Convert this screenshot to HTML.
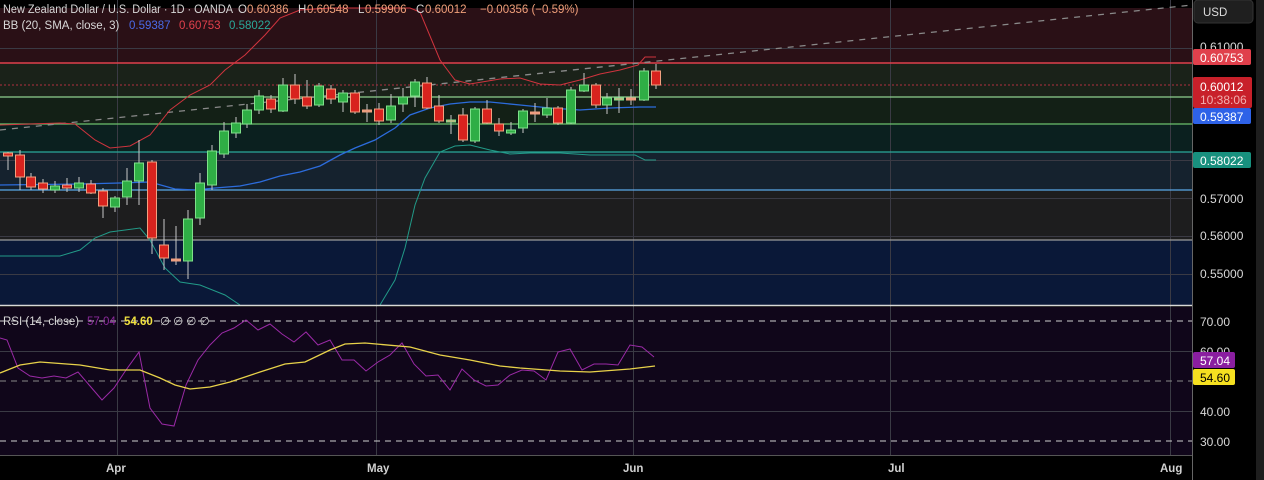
<!DOCTYPE html>
<html><head><meta charset="utf-8"><style>
html,body{margin:0;padding:0;background:#000;width:1264px;height:480px;overflow:hidden}
svg{display:block;font-family:"Liberation Sans",sans-serif}
</style></head><body>
<svg id="s" width="1264" height="480" viewBox="0 0 1264 480" xmlns="http://www.w3.org/2000/svg">
<rect width="1264" height="480" fill="#000"/>
<!-- main pane bands -->
<rect x="0" y="0" width="1192" height="63" fill="#2a1016"/>
<rect x="0" y="63" width="1192" height="34" fill="#1a2219"/>
<rect x="0" y="97" width="1192" height="27" fill="#132016"/>
<rect x="0" y="124" width="1192" height="28" fill="#0b201f"/>
<rect x="0" y="152" width="1192" height="38" fill="#15222e"/>
<rect x="0" y="190" width="1192" height="50" fill="#1d1d1e"/>
<rect x="0" y="240" width="1192" height="65" fill="#0a1838"/>
<!-- BB fill -->
<rect x="0" y="0" width="1192" height="8" fill="#000"/>
<!-- RSI pane -->
<rect x="0" y="307" width="1192" height="148" fill="#10061a"/>
<g id="grid" stroke="#3a3a44" stroke-width="1"></g>
<line x1="0" y1="63" x2="1192" y2="63" stroke="#e0404c" stroke-width="1.5"/>
<line x1="0" y1="85" x2="1192" y2="85" stroke="#b03040" stroke-width="1" stroke-dasharray="2,2"/>
<line x1="0" y1="97" x2="1192" y2="97" stroke="#8fd08f" stroke-width="1.2"/>
<line x1="0" y1="124" x2="1192" y2="124" stroke="#6cc06c" stroke-width="1.2"/>
<line x1="0" y1="152" x2="1192" y2="152" stroke="#2aa89a" stroke-width="1.2"/>
<line x1="0" y1="190" x2="1192" y2="190" stroke="#5aa8e8" stroke-width="1.2"/>
<line x1="0" y1="240" x2="1192" y2="240" stroke="#9a9a9a" stroke-width="1.2"/>
<line x1="0" y1="130" x2="1192" y2="5" stroke="#8a8a8a" stroke-width="1.3" stroke-dasharray="6,6"/>
<polyline fill="none" stroke="#d0343e" stroke-width="1" points="0,125 60,123 75,124 95,140 110,148 130,146 150,135 170,110 190,95 210,85 225,70 245,55 265,35 280,18 300,10 330,8 410,8 420,12 440,60 455,80 470,84 500,79 520,78 540,84 560,85 580,80 600,74 620,70 638,65 645,57 656,57"/>
<polyline fill="none" stroke="#2c6cdc" stroke-width="1.3" points="0,185 80,184 120,183 150,182 175,189 195,190 215,188 240,186 260,182 280,176 300,172 320,166 340,155 355,148 375,140 395,128 410,115 430,108 450,104 470,102 490,102 520,105 550,108 580,110 610,108 640,107 656,107"/>
<polyline fill="none" stroke="#229a88" stroke-width="1" points="0,256 60,256 80,250 95,238 110,232 140,228 150,240 165,268 180,282 200,285 225,295 240,305"/>
<polyline fill="none" stroke="#229a88" stroke-width="1" points="380,305 395,280 405,248 415,205 425,178 440,152 455,146 470,145 490,150 510,154 530,153 560,153 590,155 610,155 635,155 645,160 656,160"/>
<g id="candles"></g>
<!-- pane separator -->
<line x1="0" y1="305.5" x2="1256" y2="305.5" stroke="#d8d8d8" stroke-width="1.5"/>
<line x1="0" y1="455.5" x2="1192" y2="455.5" stroke="#555" stroke-width="1"/>
<!-- RSI lines -->
<line x1="0" y1="321" x2="1192" y2="321" stroke="#d0d0d0" stroke-width="1" stroke-dasharray="6,5"/>
<line x1="0" y1="381" x2="1192" y2="381" stroke="#888" stroke-width="1" stroke-dasharray="6,5"/>
<line x1="0" y1="441" x2="1192" y2="441" stroke="#d0d0d0" stroke-width="1" stroke-dasharray="6,5"/>
<polyline fill="none" stroke="#9a2aa6" stroke-width="1" points="0,338 7,340 18,368 30,376 42,378 54,376 66,378 78,372 90,386 102,400 114,388 126,370 139,352 150,408 162,424 174,426 186,385 198,360 210,345 222,333 234,328 246,320 258,330 270,324 282,334 294,342 306,332 318,345 330,340 342,360 354,360 366,371 378,362 390,355 402,343 414,364 426,376 438,375 450,390 462,369 474,380 486,386 498,385 510,375 522,370 534,371 546,380 558,352 570,349 582,370 594,364 606,364 618,365 630,345 642,347 654,357"/>
<polyline fill="none" stroke="#e8d24a" stroke-width="1.3" points="0,373 20,365 40,362 80,365 110,370 140,370 160,378 175,385 190,389 210,387 230,382 260,372 285,364 305,362 330,350 345,344 365,343 410,347 440,355 470,360 500,366 520,368 560,371 590,372 630,369 655,366"/>
<!-- right axis -->
<rect x="1192" y="0" width="64" height="480" fill="#000"/>
<line x1="1192.5" y1="0" x2="1192.5" y2="480" stroke="#666" stroke-width="1"/>
<rect x="1256" y="0" width="8" height="480" fill="#1e1e1e"/>
<rect x="1194" y="0" width="59" height="23" rx="4" fill="#1f1f1f" stroke="#333"/>
<text x="1203" y="16" font-size="11.5" fill="#ddd">USD</text>
<g font-size="12" fill="#d8d8d8">
<text x="1200" y="51">0.61000</text>
<text x="1200" y="124">0.59000</text>
<text x="1200" y="203">0.57000</text>
<text x="1200" y="240">0.56000</text>
<text x="1200" y="278">0.55000</text>
<text x="1200" y="326">70.00</text>
<text x="1200" y="356">60.00</text>
<text x="1200" y="416">40.00</text>
<text x="1200" y="446">30.00</text>
</g>
<rect x="1193" y="49" width="58" height="16" rx="2" fill="#e0404c"/>
<text x="1200" y="62" font-size="12" fill="#fff">0.60753</text>
<rect x="1193" y="77" width="59" height="31" rx="2" fill="#c8202a"/>
<text x="1200" y="91" font-size="12" fill="#fff">0.60012</text>
<text x="1200" y="104" font-size="12" fill="#f0b0b0">10:38:06</text>
<rect x="1193" y="108" width="58" height="16" rx="2" fill="#2e62e8"/>
<text x="1200" y="121" font-size="12" fill="#fff">0.59387</text>
<rect x="1193" y="152" width="58" height="16" rx="2" fill="#18907e"/>
<text x="1200" y="165" font-size="12" fill="#fff">0.58022</text>
<rect x="1193" y="352" width="42" height="16" rx="2" fill="#8a1ea0"/>
<text x="1200" y="365" font-size="12" fill="#fff">57.04</text>
<rect x="1193" y="369" width="42" height="16" rx="2" fill="#f5e020"/>
<text x="1200" y="382" font-size="12" fill="#000">54.60</text>
<!-- time axis -->
<g font-size="11.5" fill="#d0d0d0" font-weight="bold">
<text x="106" y="472">Apr</text>
<text x="367" y="472">May</text>
<text x="623" y="472">Jun</text>
<text x="888" y="472">Jul</text>
<text x="1160" y="472">Aug</text>
</g>
<!-- legend -->
<g font-size="11.5">
<text x="3" y="13" fill="#d8d8d8" textLength="230" lengthAdjust="spacingAndGlyphs">New Zealand Dollar / U.S. Dollar · 1D · OANDA</text>
<text x="238" y="13" fill="#d8d8d8">O</text><text x="247" y="13" fill="#f0a07a">0.60386</text>
<text x="298" y="13" fill="#d8d8d8">H</text><text x="307" y="13" fill="#f0a07a">0.60548</text>
<text x="358" y="13" fill="#d8d8d8">L</text><text x="365" y="13" fill="#f0a07a">0.59906</text>
<text x="416" y="13" fill="#d8d8d8">C</text><text x="425" y="13" fill="#f0a07a">0.60012</text>
<text x="480" y="13" fill="#f0a07a">−0.00356 (−0.59%)</text>
<text x="3" y="29" fill="#d8d8d8">BB (20, SMA, close, 3)</text>
<text x="129" y="29" fill="#4a6ae8">0.59387</text>
<text x="179" y="29" fill="#e0404c">0.60753</text>
<text x="229" y="29" fill="#2aa89a">0.58022</text>
<text x="3" y="325" fill="#d8d8d8">RSI (14, close)</text>
<text x="87" y="325" fill="#8a2a9a">57.04</text>
<text x="124" y="325" fill="#f0e040" font-weight="bold">54.60</text>
<text x="160" y="325" fill="#d8d8d8">∅ ∅ ∅ ∅</text>
</g>
</svg>
<script>
var NS="http://www.w3.org/2000/svg";
function el(p,t,a){var e=document.createElementNS(NS,t);for(var k in a)e.setAttribute(k,a[k]);p.appendChild(e);return e;}
var g=document.getElementById('grid');
[117,376,633,890,1170].forEach(function(x){el(g,'line',{x1:x+.5,y1:0,x2:x+.5,y2:455});});
[48,160,198,236,274].forEach(function(y){el(g,'line',{x1:0,y1:y+.5,x2:1192,y2:y+.5});});
[351,411].forEach(function(y){el(g,'line',{x1:0,y1:y+.5,x2:1192,y2:y+.5});});
// x, open, close, high, low (y coords)
var C=[[8,153,156,152,170],[20,155,177,150,190],[31,177,187,173,190],[43,183,189,179,193],[55,190,186,181,193],[67,185,188,178,192],[79,188,183,177,192],[91,184,193,180,194],[103,191,206,188,218],[115,207,198,196,212],[127,197,181,168,205],[139,181,163,140,205],[152,162,238,160,254],[164,245,258,219,270],[176,259,261,226,265],[188,261,219,210,279],[200,218,183,173,225],[212,185,151,145,190],[224,154,131,122,158],[236,133,123,117,138],[247,124,110,104,128],[259,110,96,90,114],[271,99,109,95,113],[283,111,85,78,112],[295,85,99,74,104],[307,97,106,80,109],[319,105,86,83,107],[331,89,99,85,104],[343,102,93,90,112],[355,93,112,90,114],[367,110,111,104,122],[379,109,121,103,125],[391,120,106,94,123],[403,104,97,88,112],[415,96,82,79,107],[427,83,108,77,109],[439,106,121,95,123],[451,122,120,115,134],[463,115,140,108,142],[475,141,109,107,143],[487,109,123,100,124],[499,124,131,118,136],[511,133,130,122,135],[523,128,111,109,133],[535,112,113,103,122],[547,115,108,98,118],[558,108,123,106,125],[571,123,90,87,124],[584,91,85,73,92],[596,85,105,83,108],[607,105,98,93,114],[619,99,98,88,113],[631,98,99,89,105],[644,100,71,68,101],[656,71,85,64,89]];
var cg=document.getElementById('candles');
C.forEach(function(c){
 var x=c[0],o=c[1],cl=c[2],up=cl<o;
 var top=Math.min(o,cl),h=Math.max(Math.abs(o-cl),2);
 el(cg,'line',{x1:x,y1:c[3],x2:x,y2:c[4],stroke:'#c8c8c8','stroke-width':1});
 var body=h<=2?'#e89c80':(up?'#2fae45':'#d8231e');
 el(cg,'rect',{x:x-4.5,y:top,width:9,height:h,fill:body,stroke:up?'#7fe08a':'#f2a080','stroke-width':1});
});
</script>
</body></html>
